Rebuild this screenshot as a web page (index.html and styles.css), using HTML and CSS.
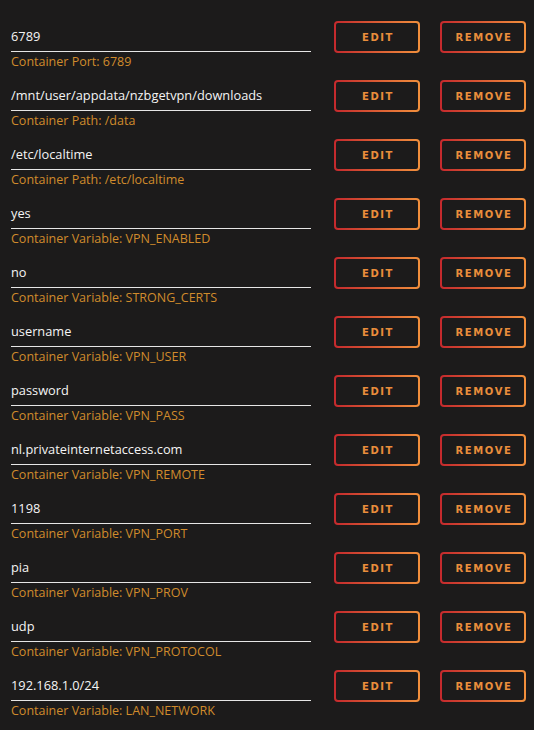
FILE: index.html
```html
<!DOCTYPE html>
<html>
<head>
<meta charset="utf-8">
<link rel="stylesheet" href="styles.css">
</head>
<body>
<div class="list">
  <div class="row">
    <div class="field"><div class="value">6789</div><div class="label">Container Port: 6789</div></div>
    <div class="actions"><button class="btn">Edit</button><button class="btn">Remove</button></div>
  </div>
  <div class="row">
    <div class="field"><div class="value">/mnt/user/appdata/nzbgetvpn/downloads</div><div class="label">Container Path: /data</div></div>
    <div class="actions"><button class="btn">Edit</button><button class="btn">Remove</button></div>
  </div>
  <div class="row">
    <div class="field"><div class="value">/etc/localtime</div><div class="label">Container Path: /etc/localtime</div></div>
    <div class="actions"><button class="btn">Edit</button><button class="btn">Remove</button></div>
  </div>
  <div class="row">
    <div class="field"><div class="value">yes</div><div class="label">Container Variable: VPN_ENABLED</div></div>
    <div class="actions"><button class="btn">Edit</button><button class="btn">Remove</button></div>
  </div>
  <div class="row">
    <div class="field"><div class="value">no</div><div class="label">Container Variable: STRONG_CERTS</div></div>
    <div class="actions"><button class="btn">Edit</button><button class="btn">Remove</button></div>
  </div>
  <div class="row">
    <div class="field"><div class="value">username</div><div class="label">Container Variable: VPN_USER</div></div>
    <div class="actions"><button class="btn">Edit</button><button class="btn">Remove</button></div>
  </div>
  <div class="row">
    <div class="field"><div class="value">password</div><div class="label">Container Variable: VPN_PASS</div></div>
    <div class="actions"><button class="btn">Edit</button><button class="btn">Remove</button></div>
  </div>
  <div class="row">
    <div class="field"><div class="value">nl.privateinternetaccess.com</div><div class="label">Container Variable: VPN_REMOTE</div></div>
    <div class="actions"><button class="btn">Edit</button><button class="btn">Remove</button></div>
  </div>
  <div class="row">
    <div class="field"><div class="value">1198</div><div class="label">Container Variable: VPN_PORT</div></div>
    <div class="actions"><button class="btn">Edit</button><button class="btn">Remove</button></div>
  </div>
  <div class="row">
    <div class="field"><div class="value">pia</div><div class="label">Container Variable: VPN_PROV</div></div>
    <div class="actions"><button class="btn">Edit</button><button class="btn">Remove</button></div>
  </div>
  <div class="row">
    <div class="field"><div class="value">udp</div><div class="label">Container Variable: VPN_PROTOCOL</div></div>
    <div class="actions"><button class="btn">Edit</button><button class="btn">Remove</button></div>
  </div>
  <div class="row">
    <div class="field"><div class="value">192.168.1.0/24</div><div class="label">Container Variable: LAN_NETWORK</div></div>
    <div class="actions"><button class="btn">Edit</button><button class="btn">Remove</button></div>
  </div>
</div>
</body>
</html>
```
FILE: styles.css
```css
html, body {
  margin: 0;
  padding: 0;
  background: #1c1b1b;
}
body {
  font-family: "Open Sans", "DejaVu Sans", sans-serif;
}
.list {
  padding: 21px 0 0 11px;
  display: flex;
  flex-direction: column;
}
.row {
  display: flex;
  align-items: flex-start;
  height: 59px;
}
.field {
  width: 300px;
  padding-top: 6px;
}
.value {
  height: 24px;
  line-height: 18px;
  font-size: 12.8px;
  font-weight: 500;
  color: #f4f4f4;
  border-bottom: 1px solid #e6e6e6;
}
.label {
  line-height: 20px;
  font-size: 12.5px;
  color: #d08b2c;
}
.actions {
  display: flex;
  gap: 20px;
  margin-left: 23px;
}
.btn {
  width: 86px;
  height: 32px;
  padding: 0 0 0 2px;
  border: 2px solid transparent;
  border-radius: 4px;
  background: linear-gradient(#1c1b1b, #1c1b1b) padding-box,
              linear-gradient(90deg, #c4292d, #f2903c) border-box;
  color: #ea8e3c;
  font-family: "DejaVu Sans", sans-serif;
  font-weight: bold;
  font-size: 10px;
  letter-spacing: 1.6px;
  text-transform: uppercase;
}
```
